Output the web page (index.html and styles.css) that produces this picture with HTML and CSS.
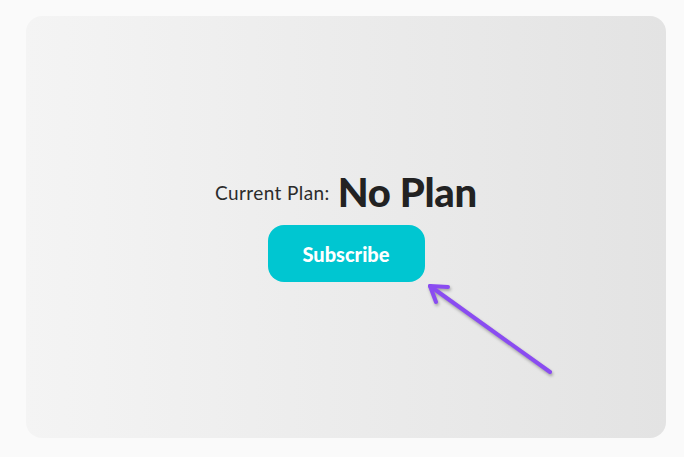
FILE: index.html
```html
<!DOCTYPE html>
<html lang="en">
<head>
    <meta charset="UTF-8">
    <meta name="viewport" content="width=device-width, initial-scale=1.0">
    <title>Current Plan</title>
    <link rel="stylesheet" href="styles.css">
</head>
<body>
    <div class="card">
        <div class="plan-row">
            <span class="plan-label">Current Plan:</span>
            <span class="plan-name">No Plan</span>
        </div>
        <button class="subscribe-btn">Subscribe</button>
        <!-- pointer arrow drawn over the card -->
        <svg class="pointer" width="140" height="100" viewBox="0 0 140 100">
            <g fill="none" stroke="#8a4cf1" stroke-width="4" stroke-linecap="round" stroke-linejoin="round">
                <line x1="124" y1="90" x2="4" y2="4"/>
                <polyline points="22,5 4,4 10,20"/>
            </g>
        </svg>
    </div>
</body>
</html>
```

FILE: styles.css
```css
body { margin: 0; background: #fafafa; font-family: Lato, "Noto Sans", sans-serif; }
.card { position: relative; box-sizing: border-box; margin: 16px 18px 19px 26px; height: 422px; padding-bottom: 4px; border-radius: 16px; background: linear-gradient(90deg, #f4f4f4, #e3e3e3); display: flex; flex-direction: column; align-items: center; justify-content: center; gap: 9px; }
.plan-row { display: flex; align-items: center; gap: 8px; color: #222; }
.plan-label { font-size: 19px; letter-spacing: 0.4px; color: #2b2b2b; }
.plan-name { font-size: 40px; font-weight: 900; letter-spacing: -0.3px; }
.subscribe-btn { width: 157px; height: 57px; border: none; border-radius: 16px; background: #00c6d1; color: #fff; font-family: inherit; font-size: 20px; font-weight: 900; }
.pointer { position: absolute; left: 400px; top: 266px; filter: drop-shadow(1px 2px 1.5px rgba(0,0,0,0.3)); }
```
